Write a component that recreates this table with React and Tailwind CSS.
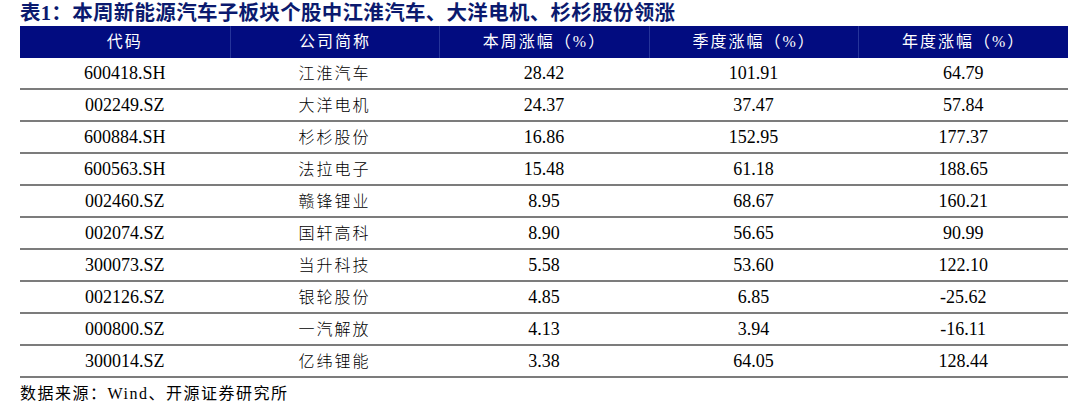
const rows = [
  ['600418.SH', '江淮汽车', '28.42', '101.91', '64.79'],
  ['002249.SZ', '大洋电机', '24.37', '37.47', '57.84'],
  ['600884.SH', '杉杉股份', '16.86', '152.95', '177.37'],
  ['600563.SH', '法拉电子', '15.48', '61.18', '188.65'],
  ['002460.SZ', '赣锋锂业', '8.95', '68.67', '160.21'],
  ['002074.SZ', '国轩高科', '8.90', '56.65', '90.99'],
  ['300073.SZ', '当升科技', '5.58', '53.60', '122.10'],
  ['002126.SZ', '银轮股份', '4.85', '6.85', '-25.62'],
  ['000800.SZ', '一汽解放', '4.13', '3.94', '-16.11'],
  ['300014.SZ', '亿纬锂能', '3.38', '64.05', '128.44'],
]

const headers = ['代码', '公司简称', '本周涨幅（%）', '季度涨幅（%）', '年度涨幅（%）']

const serif = "font-['Liberation_Serif','Noto_Sans_CJK_SC',serif]"

export default function App() {
  return (
    <div className={`h-[407px] w-[1089px] bg-white ${serif}`}>
      <h1 className="pl-[20px] text-[20.5px] font-bold leading-[26px] tracking-[0.3px] text-[#0b1a6e]">
        表1：本周新能源汽车子板块个股中江淮汽车、大洋电机、杉杉股份领涨
      </h1>

      <div className="ml-[20px] w-[1048px]">
        <div className="grid h-[32px] grid-cols-5 bg-[#020c80] text-white">
          {headers.map((h, i) => (
            <div
              key={h}
              className={`flex items-center justify-center text-[16px] tracking-[2px] ${i > 0 ? 'border-l border-[#26349a]' : ''}`}
            >
              {h}
            </div>
          ))}
        </div>

        {rows.map((r) => (
          <div key={r[0]} className="grid h-[32px] grid-cols-5 border-b-2 border-[#7c7c7c] text-black">
            {r.map((c, i) => (
              <div
                key={i}
                className={`flex items-center justify-center pt-[1px] ${i === 1 ? 'text-[16px] tracking-[2px] font-light' : 'text-[18px]'}`}
              >
                {c}
              </div>
            ))}
          </div>
        ))}
      </div>

      <p className="pl-[20px] pt-[6px] text-[16px] leading-[20px] tracking-[1.5px] text-black">
        数据来源：Wind、开源证券研究所
      </p>
    </div>
  )
}
